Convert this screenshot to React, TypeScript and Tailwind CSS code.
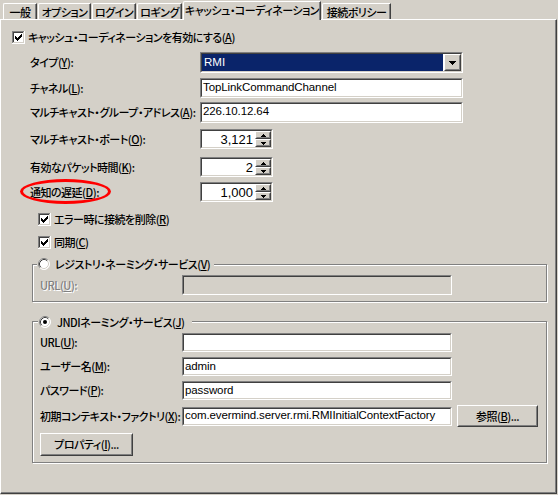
import React from "react";

const Mn = ({ t, k, tail = "" }: { t: string; k: string; tail?: string }) => (
  <span className="whitespace-nowrap">
    {t}(<span className="underline underline-offset-[1px]">{k}</span>){tail}
  </span>
);

const Sunken = ({ className = "", inner = "", children }: { className?: string; inner?: string; children?: React.ReactNode }) => (
  <div className={`border border-t-[#808080] border-l-[#808080] border-r-white border-b-white ${className}`}>
    <div className={`h-full w-full border border-t-[#404040] border-l-[#404040] border-r-[#d4d0c8] border-b-[#d4d0c8] ${inner}`}>{children}</div>
  </div>
);

const Raised = ({ className = "", inner = "", children }: { className?: string; inner?: string; children?: React.ReactNode }) => (
  <div className={`border border-t-white border-l-white border-r-[#404040] border-b-[#404040] bg-[#d4d0c8] ${className}`}>
    <div className={`h-full w-full border border-t-[#d4d0c8] border-l-[#d4d0c8] border-r-[#808080] border-b-[#808080] flex items-center justify-center ${inner}`}>{children}</div>
  </div>
);

const TextBox = ({ w, h, value = "", disabled = false }: { w: string; h: string; value?: string; disabled?: boolean }) => (
  <Sunken
    className={`${w} ${h}`}
    inner={`${disabled ? "bg-[#d4d0c8]" : "bg-white"} flex items-center pl-[1px] overflow-hidden whitespace-nowrap leading-none font-['Liberation_Sans',sans-serif] text-[11.5px] tracking-[-0.1px] font-normal`}
  >
    {value}
  </Sunken>
);

const CheckBox = () => (
  <svg width="13" height="13" viewBox="0 0 13 13" shapeRendering="crispEdges" className="shrink-0">
    <rect x="0" y="0" width="13" height="13" fill="#ffffff" />
    <rect x="0" y="0" width="12" height="1" fill="#808080" />
    <rect x="0" y="0" width="1" height="12" fill="#808080" />
    <rect x="1" y="1" width="10" height="1" fill="#404040" />
    <rect x="1" y="1" width="1" height="10" fill="#404040" />
    <rect x="1" y="11" width="11" height="1" fill="#d4d0c8" />
    <rect x="11" y="1" width="1" height="11" fill="#d4d0c8" />
    <rect x="3" y="5" width="1" height="3" fill="#000" />
    <rect x="4" y="6" width="1" height="3" fill="#000" />
    <rect x="5" y="7" width="1" height="3" fill="#000" />
    <rect x="6" y="6" width="1" height="3" fill="#000" />
    <rect x="7" y="5" width="1" height="3" fill="#000" />
    <rect x="8" y="4" width="1" height="3" fill="#000" />
    <rect x="9" y="3" width="1" height="3" fill="#000" />
  </svg>
);

const Radio = ({ on = false }: { on?: boolean }) => (
  <svg width="12" height="12" viewBox="0 0 12 12" className="shrink-0">
    <circle cx="6" cy="6" r="5.5" fill="#ffffff" />
    <path d="M9.89 2.11 A5.5 5.5 0 0 0 2.11 9.89" fill="none" stroke="#808080" strokeWidth="1" />
    <path d="M9.18 2.82 A4.5 4.5 0 0 0 2.82 9.18" fill="none" stroke="#404040" strokeWidth="1" />
    <path d="M9.89 2.11 A5.5 5.5 0 0 1 2.11 9.89" fill="none" stroke="#ffffff" strokeWidth="1" />
    <path d="M9.18 2.82 A4.5 4.5 0 0 1 2.82 9.18" fill="none" stroke="#d4d0c8" strokeWidth="1" />
    {on && <circle cx="6" cy="6" r="2" fill="#000" />}
  </svg>
);

const Spin = ({ value }: { value: string }) => (
  <Sunken className="w-[73px] h-[20px]" inner="bg-white flex">
    <div className="flex-1 flex items-center justify-end pr-[2px] leading-none text-[13px] tracking-normal font-normal font-['Liberation_Sans',sans-serif]">{value}</div>
    <div className="w-[16px] h-full flex flex-col">
      <Raised className="h-[8px] w-full">
        <svg width="5" height="3" viewBox="0 0 5 3" shapeRendering="crispEdges"><path d="M2 0h1v1h1v1h1v1H0V2h1V1h1z" fill="#000" /></svg>
      </Raised>
      <Raised className="h-[8px] w-full">
        <svg width="5" height="3" viewBox="0 0 5 3" shapeRendering="crispEdges"><path d="M0 0h5v1H4v1H3v1H2V2H1V1H0z" fill="#000" /></svg>
      </Raised>
    </div>
  </Sunken>
);

const Tab = ({ w, label, selected = false }: { w: string; label: string; selected?: boolean }) => (
  <div
    className={`${w} ${selected ? "h-[19px] -mb-[1px] relative z-10 pb-[2px]" : "h-[16px] pt-[1px]"} border-t border-l border-t-white border-l-white border-r border-r-[#404040] shadow-[inset_-1px_0_0_#808080] rounded-tl-[2px] bg-[#d4d0c8] flex items-center justify-center whitespace-nowrap leading-none`}
  >
    {label}
  </div>
);

const Row = ({ mt, h, label, children, extra }: { mt: string; h: string; label: React.ReactNode; children: React.ReactNode; extra?: React.ReactNode }) => (
  <div className={`relative flex items-center ${mt} ${h} pl-[29px]`}>
    <div className="w-[170px] leading-none">{label}</div>
    {children}
    {extra}
  </div>
);

const GRow = ({ mt, h, label, children, disabled = false }: { mt: string; h: string; label: React.ReactNode; children: React.ReactNode; disabled?: boolean }) => (
  <div className={`flex items-center ${mt} ${h} pl-[7px]`}>
    <div className={`w-[142px] leading-none ${disabled ? "text-[#808080] [text-shadow:1px_1px_0_#ffffff]" : ""}`}>{label}</div>
    {children}
  </div>
);

export default function App() {
  return (
    <div className="w-[558px] h-[495px] bg-[#d4d0c8] overflow-hidden text-[11px] tracking-[-0.5px] font-medium text-black font-['Noto_Sans_CJK_JP',sans-serif] [font-feature-settings:'palt'] select-none">
      {/* tab strip */}
      <div className="h-[19px] flex items-end gap-[1px] pl-[3px]">
        <Tab w="w-[34px]" label="一般" />
        <Tab w="w-[53px]" label="オプション" />
        <Tab w="w-[44px]" label="ログイン" />
        <Tab w="w-[45px]" label="ロギング" />
        <Tab w="w-[138px]" label="キャッシュ・コーディネーション" selected />
        <Tab w="w-[69px]" label="接続ポリシー" />
      </div>

      {/* panel */}
      <div className="w-[557px] h-[475px] border border-t-white border-l-white border-r-[#404040] border-b-[#404040] shadow-[inset_-1px_-1px_0_#808080] flex flex-col">
        <div className="flex items-center mt-[11px] h-[13px] pl-[11px] gap-[3px]">
          <CheckBox />
          <span className="leading-none"><Mn t="キャッシュ・コーディネーションを有効にする" k="A" /></span>
        </div>

        <Row mt="mt-[8px]" h="h-[21px]" label={<Mn t="タイプ" k="Y" tail=":" />}>
          <Sunken className="w-[263px] h-[21px]" inner="bg-white flex">
            <div className="flex-1 bg-[#0a246a] text-white flex items-center pl-[2px] mr-[1px] leading-none font-['Liberation_Sans',sans-serif] text-[11.5px] font-normal tracking-normal">RMI</div>
            <Raised className="w-[17px] h-full">
              <svg width="7" height="4" viewBox="0 0 7 4" shapeRendering="crispEdges"><path d="M0 0h7v1H6v1H5v1H4v1H3V3H2V2H1V1H0z" fill="#000" /></svg>
            </Raised>
          </Sunken>
        </Row>

        <Row mt="mt-[5px]" h="h-[20px]" label={<Mn t="チャネル" k="L" tail=":" />}>
          <TextBox w="w-[263px]" h="h-[20px]" value="TopLinkCommandChannel" />
        </Row>

        <Row mt="mt-[4px]" h="h-[20px]" label={<Mn t="マルチキャスト・グループ・アドレス" k="A" tail=":" />}>
          <TextBox w="w-[263px]" h="h-[21px]" value="226.10.12.64" />
        </Row>

        <Row mt="mt-[7px]" h="h-[20px]" label={<Mn t="マルチキャスト・ポート" k="O" tail=":" />}>
          <Spin value="3,121" />
        </Row>

        <Row mt="mt-[8px]" h="h-[20px]" label={<Mn t="有効なパケット時間" k="K" tail=":" />}>
          <Spin value="2" />
        </Row>

        <Row
          mt="mt-[5px]"
          h="h-[20px]"
          label={<Mn t="通知の遅延" k="D" tail=":" />}
          extra={<div className="absolute left-[19px] top-[-3px] w-[91px] h-[25px] rounded-[50%] border-[3px] border-[#ff0000] pointer-events-none" />}
        >
          <Spin value="1,000" />
        </Row>

        <div className="flex items-center mt-[11px] h-[13px] pl-[37px] gap-[3px]">
          <CheckBox />
          <span className="leading-none"><Mn t="エラー時に接続を削除" k="R" /></span>
        </div>
        <div className="flex items-center mt-[10px] h-[13px] pl-[37px] gap-[3px]">
          <CheckBox />
          <span className="leading-none"><Mn t="同期" k="C" /></span>
        </div>

        {/* registry group */}
        <div className="relative mt-[15px] ml-[31px] w-[515px] h-[38px] border border-[#808080] shadow-[inset_1px_1px_0_#ffffff,1px_1px_0_#ffffff] flex flex-col">
          <div className="absolute left-[4px] top-[-8px] h-[14px] flex items-center gap-[5px] bg-[#d4d0c8] pr-[4px] pl-[1px]">
            <Radio />
            <span className="leading-none"><Mn t="レジストリ・ネーミング・サービス" k="V" /></span>
          </div>
          <GRow mt="mt-[10px]" h="h-[20px]" label={<Mn t="URL" k="U" tail=":" />} disabled>
            <TextBox w="w-[270px]" h="h-[20px]" disabled />
          </GRow>
        </div>

        {/* JNDI group */}
        <div className="relative mt-[19px] ml-[31px] w-[515px] h-[142px] border border-[#808080] shadow-[inset_1px_1px_0_#ffffff,1px_1px_0_#ffffff] flex flex-col">
          <div className="absolute left-[5px] top-[-7px] h-[14px] flex items-center gap-[6px] bg-[#d4d0c8] pr-[8px] pl-[1px]">
            <Radio on />
            <span className="leading-none"><Mn t="JNDIネーミング・サービス" k="J" /></span>
          </div>
          <GRow mt="mt-[11px]" h="h-[19px]" label={<Mn t="URL" k="U" tail=":" />}>
            <TextBox w="w-[270px]" h="h-[19px]" />
          </GRow>
          <GRow mt="mt-[5px]" h="h-[19px]" label={<Mn t="ユーザー名" k="M" tail=":" />}>
            <TextBox w="w-[270px]" h="h-[19px]" value="admin" />
          </GRow>
          <GRow mt="mt-[5px]" h="h-[19px]" label={<Mn t="パスワード" k="P" tail=":" />}>
            <TextBox w="w-[270px]" h="h-[19px]" value="password" />
          </GRow>
          <GRow mt="mt-[5px]" h="h-[22px]" label={<Mn t="初期コンテキスト・ファクトリ" k="X" tail=":" />}>
            <TextBox w="w-[270px]" h="h-[19px]" value="com.evermind.server.rmi.RMIInitialContextFactory" />
            <Raised className="ml-[5px] w-[81px] h-[22px]" inner="leading-none">
              <Mn t="参照" k="B" tail="..." />
            </Raised>
          </GRow>
          <div className="mt-[6px] pl-[7px]">
            <Raised className="w-[93px] h-[23px]" inner="leading-none">
              <Mn t="プロパティ" k="I" tail="..." />
            </Raised>
          </div>
        </div>
      </div>
    </div>
  );
}
